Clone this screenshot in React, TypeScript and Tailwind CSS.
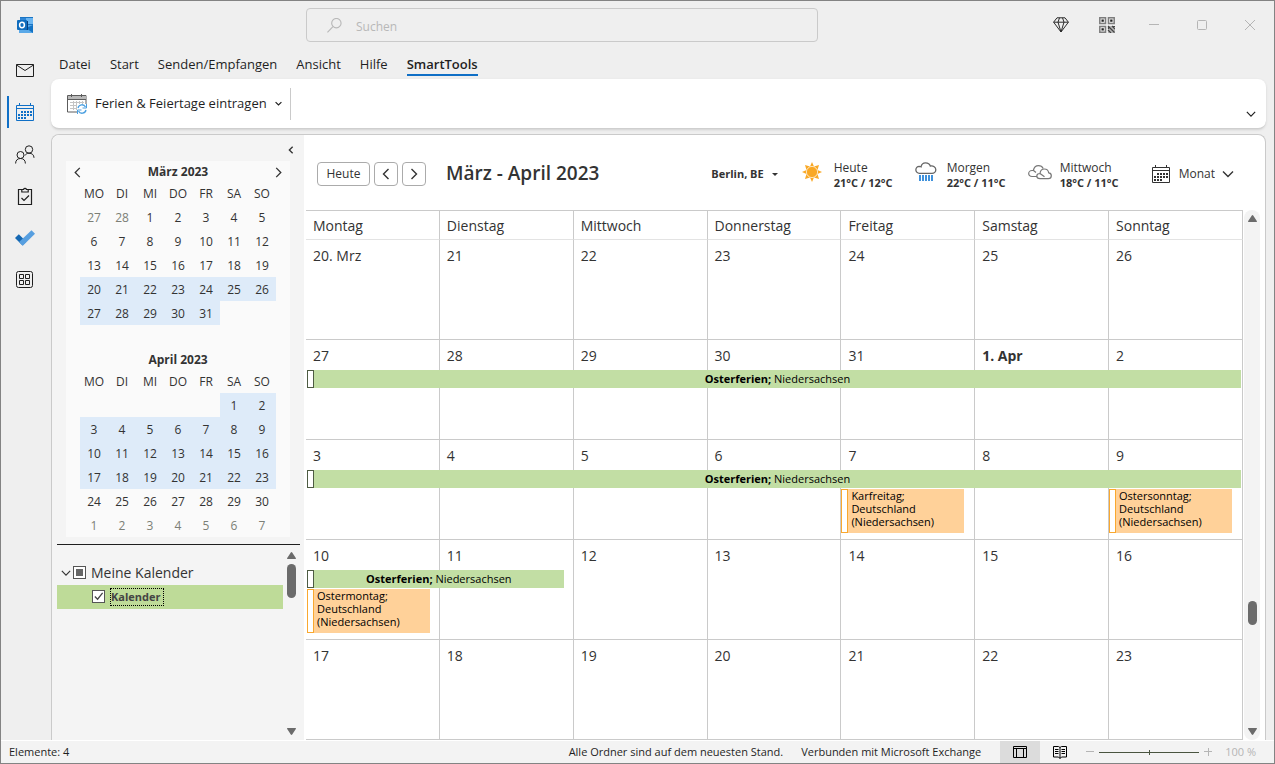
import { clsx } from "clsx";

const WEEKDAYS_SHORT = ["MO", "DI", "MI", "DO", "FR", "SA", "SO"];
const WEEKDAYS = ["Montag", "Dienstag", "Mittwoch", "Donnerstag", "Freitag", "Samstag", "Sonntag"];

const TABS = ["Datei", "Start", "Senden/Empfangen", "Ansicht", "Hilfe", "SmartTools"];

type Mark = "muted" | "selected" | "empty" | "normal";
interface MiniDay {
  label: string;
  mark: Mark;
}

const days = (from: number, to: number, mark: Mark): MiniDay[] =>
  Array.from({ length: to - from + 1 }, (_, i) => ({ label: String(from + i), mark }));
const blanks = (count: number): MiniDay[] => Array.from({ length: count }, () => ({ label: "", mark: "empty" }));

const MARCH = [...days(27, 28, "muted"), ...days(1, 19, "normal"), ...days(20, 31, "selected"), ...blanks(2)];
const APRIL = [...blanks(5), ...days(1, 23, "selected"), ...days(24, 30, "normal"), ...days(1, 7, "muted")];

interface CalendarEvent {
  kind: "ferien" | "feiertag";
  title: string;
  region?: string;
  width: string;
  lower?: boolean;
}

interface Day {
  label: string;
  bold?: boolean;
  events?: CalendarEvent[];
}

const FULL_WEEK: CalendarEvent = {
  kind: "ferien",
  title: "Osterferien;",
  region: "Niedersachsen",
  width: "w-[calc(700%+4px)]",
};
const holiday = (title: string, lower: boolean): CalendarEvent => ({
  kind: "feiertag",
  title,
  width: "w-[calc(100%-10px)]",
  lower,
});

const WEEKS: Day[][] = [
  ["20. Mrz", "21", "22", "23", "24", "25", "26"].map((label) => ({ label })),
  [
    { label: "27", events: [FULL_WEEK] },
    { label: "28" },
    { label: "29" },
    { label: "30" },
    { label: "31" },
    { label: "1. Apr", bold: true },
    { label: "2" },
  ],
  [
    { label: "3", events: [FULL_WEEK] },
    { label: "4" },
    { label: "5" },
    { label: "6" },
    { label: "7", events: [holiday("Karfreitag;", true)] },
    { label: "8" },
    { label: "9", events: [holiday("Ostersonntag;", true)] },
  ],
  [
    {
      label: "10",
      events: [{ ...FULL_WEEK, width: "w-[calc(200%-9px)]" }, holiday("Ostermontag;", false)],
    },
    ...["11", "12", "13", "14", "15", "16"].map((label) => ({ label })),
  ],
  ["17", "18", "19", "20", "21", "22", "23"].map((label) => ({ label })),
];

function Chevron({ dir, className }: { dir: "left" | "right" | "down"; className?: string }) {
  const d = { left: "M8.5 1 3.5 6l5 5", right: "M3.5 1l5 5-5 5", down: "M1 3.5l5 5 5-5" }[dir];
  return (
    <svg viewBox="0 0 12 12" className={clsx("fill-none stroke-current", className)} strokeWidth="1.4">
      <path d={d} />
    </svg>
  );
}

function OutlookLogo() {
  return (
    <svg viewBox="0 0 17 17" className="h-[17px] w-[17px]">
      <path d="M3 0h13v8H3z" fill="#1b75c4" />
      <path d="M3 1h6v5H3z" fill="#2f86d6" />
      <path d="M9 1h7v6H9z" fill="#6bb6f2" />
      <path d="M2 8h14v8H2z" fill="#5aa9e8" />
      <path d="M16 8v8l-7-5z" fill="#1272c4" />
      <path d="M4 4h7v9H4z" fill="#0a3e7c" />
      <rect y="3" width="10" height="10" rx="1" fill="#0f6cbd" />
      <ellipse cx="5" cy="8" rx="2.4" ry="2.7" fill="none" stroke="#fff" strokeWidth="1.5" />
    </svg>
  );
}

function CalendarIcon() {
  return (
    <svg viewBox="0 0 18 18" className="h-[18px] w-[18px]" fill="none" stroke="currentColor">
      <path d="M.5 2.5h17v15H.5zM.5 5.5h17M3.5 0v3M14.5 0v3" />
      <path d="M5 9h2m1 0h2m1 0h2m1 0h2M2 12h2m1 0h2m1 0h2m1 0h2m1 0h2M2 15h2m1 0h2m1 0h2" strokeWidth="2" />
    </svg>
  );
}

function HolidayIcon() {
  return (
    <svg viewBox="0 0 20 20" className="h-5 w-5" fill="none">
      <path d="M.5 1.5h18.500v16.500H.5z" fill="#fff" stroke="#5c5c5c" />
      <path d="M1 2h18v3H1z" fill="#b9b9b9" />
      <path d="M1 5.5h18M4.5 0v3M14.5 0v3" stroke="#5c5c5c" />
      <path d="M3 8.5h14M3 11.5h14M3 14.5h9M6.5 7v9M9.5 7v9M12.5 7v5M15.5 7v4" stroke="#c4c4c4" />
      <path d="M10 10h10v10H10z" fill="#fff" />
      <path d="M11 14a4 4 0 0 1 7.5-1M19 16a4 4 0 0 1-7.5 1" stroke="#4a9fe0" strokeWidth="1.3" />
      <path d="M19.5 10v4h-4M10.5 20v-4h4" stroke="#4a9fe0" />
    </svg>
  );
}

const RAIL = [
  {
    label: "E-Mail",
    icon: (
      <svg viewBox="0 0 18 13" className="h-[13px] w-[18px]" fill="none" stroke="currentColor">
        <path d="M.5.5h17v12H.5zM.5 1 9 6.5 17.500 1" />
      </svg>
    ),
  },
  { label: "Kalender", active: true, icon: <CalendarIcon /> },
  {
    label: "Personen",
    icon: (
      <svg viewBox="0 0 20 19" className="h-[19px] w-5" fill="none" stroke="currentColor">
        <circle cx="5.500" cy="10" r="3.500" />
        <path d="M.6 18.500c0-3.300 2-5 4.900-5s4.900 1.700 4.900 5" />
        <circle cx="14" cy="4.500" r="3.700" />
        <path d="M10 10.500c.9-1.600 2.200-2.300 4-2.300 3 0 5 1.700 5 4.600" />
      </svg>
    ),
  },
  {
    label: "Aufgaben",
    icon: (
      <svg viewBox="0 0 16 18" className="h-[18px] w-4" fill="none" stroke="currentColor" strokeWidth="1.2">
        <path d="M5 2.5H1.500v15h13v-15H11" />
        <path d="M4.800 5V2.500h1.700a1.600 1.600 0 0 1 3 0h1.700V5z" />
        <path d="m4.500 11 2.500 2.500 5-5" />
      </svg>
    ),
  },
  {
    label: "To Do",
    icon: (
      <svg viewBox="0 0 20 16" className="h-4 w-5">
        <path d="M3.800 4.300 0 8l7.500 7.500 3.800-3.700z" fill="#1568b3" />
        <path d="m16.500.3 3.500 3.500L7.800 15.800 4.100 12z" fill="#579fe0" />
      </svg>
    ),
  },
  {
    label: "Weitere Apps",
    icon: (
      <svg viewBox="0 0 18 18" className="h-[18px] w-[18px]" fill="none" stroke="currentColor">
        <rect x=".5" y=".5" width="16" height="16" rx="2" />
        <path d="M3.500 3.500h4v4h-4zM9.500 3.500h4v4h-4zM3.500 9.500h4v4h-4zM9.500 9.500h4v4h-4z" />
      </svg>
    ),
  },
];

function TitleBar() {
  return (
    <header className="flex h-12 shrink-0 items-center text-[#2b2b2b]">
      <div className="w-[305px] pl-4">
        <OutlookLogo />
      </div>
      <label className="flex h-[34px] max-w-[512px] flex-1 items-center rounded border border-[#cacaca] px-5 text-[#b8b8b8]">
        <svg viewBox="0 0 16 16" className="mr-[14px] h-[15px] w-[15px] fill-none stroke-current" strokeWidth="1.2">
          <circle cx="10" cy="5.5" r="5" />
          <path d="M6.300 9.200.5 15.300" />
        </svg>
        <input
          type="search"
          aria-label="Suchen"
          placeholder="Suchen"
          className="min-w-0 flex-1 bg-transparent pt-1 text-xs outline-none placeholder:text-[#b8b8b8]"
        />
      </label>
      <div className="ml-auto flex items-center pr-[19px]">
        <button aria-label="Premium" className="mr-[30px]">
          <svg viewBox="0 0 16 16" className="h-4 w-4 fill-none stroke-current" strokeLinejoin="round">
            <path d="M4 .8h8l3.400 4.400L8 15 .6 5.200zM.6 5.200h14.800M6.500.8 5 5.200 8 15l3-9.800L9.500.8" />
          </svg>
        </button>
        <button aria-label="QR-Code" className="mr-[34px]">
          <svg viewBox="0 0 16 16" className="h-4 w-4" fill="none" stroke="#7d7d7d" strokeWidth="1.5">
            <path d="M.8.8h5.700v5.700H.8zM9.500.8h5.700v5.700H9.500zM.8 9.500h5.700v5.700H.8z" />
            <path d="M2.500 2.500h2.300v2.300H2.500zM11.200 2.500h2.300v2.300h-2.300zM2.500 11.200h2.300v2.300H2.500z" fill="#222" stroke="none" />
            <path d="M9 9h7v7H9z" fill="#b5b5b5" stroke="none" />
            <path d="m9 9 6.500 6.500M13 9l3 3M9 13l3 3M14 9.500h2M9.500 12v-3" stroke="#444" strokeWidth="1.200" />
          </svg>
        </button>
        <div className="flex items-center gap-[38px] text-[#b5b5b5]">
          <button aria-label="Minimieren">
            <svg viewBox="0 0 10 10" className="h-[10px] w-[10px] stroke-current">
              <path d="M0 4.500h10" />
            </svg>
          </button>
          <button aria-label="Maximieren">
            <svg viewBox="0 0 10 10" className="h-[10px] w-[10px] fill-none stroke-current">
              <rect x=".5" y=".5" width="9" height="9" rx="1" />
            </svg>
          </button>
          <button aria-label="Schließen">
            <svg viewBox="0 0 10 10" className="h-[10px] w-[10px] stroke-current">
              <path d="m0 0 10 10M10 0 0 10" />
            </svg>
          </button>
        </div>
      </div>
    </header>
  );
}

function Rail() {
  return (
    <nav className="flex w-[50px] shrink-0 flex-col">
      {RAIL.map((item) => (
        <button
          key={item.label}
          aria-label={item.label}
          className={clsx(
            "relative flex h-[42px] items-center justify-center pr-[2px]",
            item.active ? "text-[#0f6fc6]" : "text-[#1f1f1f]"
          )}
        >
          {item.active && <span className="absolute left-[6px] top-[5px] h-8 w-[2px] bg-[#0f6fc6]" />}
          {item.icon}
        </button>
      ))}
    </nav>
  );
}

function Ribbon() {
  return (
    <>
      <nav className="flex h-[30px] shrink-0 items-start gap-[19px] pl-2 pt-[5px] text-[13px] leading-5">
        {TABS.map((tab) => (
          <a
            key={tab}
            href="#"
            className={clsx(
              "h-[22px] border-b-2",
              tab === "SmartTools" ? "border-[#0f6fc6] font-semibold" : "border-transparent"
            )}
          >
            {tab}
          </a>
        ))}
      </nav>
      <div className="flex h-[50px] shrink-0 items-center rounded-lg border-b border-[#cfcfcf] bg-white pl-4 pr-[10px] shadow-sm">
        <button className="flex items-center gap-2 text-[13px]">
          <HolidayIcon />
          <span>Ferien &amp; Feiertage eintragen</span>
          <Chevron dir="down" className="h-[7px] w-[7px] stroke-2" />
        </button>
        <span className="ml-2 h-8 w-px bg-[#cacaca]" />
        <button aria-label="Menüband einblenden" className="ml-auto self-end pb-[9px]">
          <Chevron dir="down" className="h-[10px] w-[10px]" />
        </button>
      </div>
    </>
  );
}

function MiniMonth({ title, cells, nav }: { title: string; cells: MiniDay[]; nav?: boolean }) {
  const weeks = Array.from({ length: cells.length / 7 }, (_, i) => cells.slice(i * 7, i * 7 + 7));
  return (
    <section>
      <div className="flex h-[22px] items-center justify-center px-[6px]">
        {nav && (
          <button aria-label="Vorheriger Monat">
            <Chevron dir="left" className="h-[11px] w-[11px]" />
          </button>
        )}
        <h2 className="flex-1 text-center text-xs font-bold">{title}</h2>
        {nav && (
          <button aria-label="Nächster Monat">
            <Chevron dir="right" className="h-[11px] w-[11px]" />
          </button>
        )}
      </div>
      <table className="mx-auto w-[196px] table-fixed border-separate border-spacing-0 text-center text-xs">
        <thead>
          <tr className="h-[22px]">
            {WEEKDAYS_SHORT.map((d) => (
              <th key={d} className="p-0 font-normal">
                {d}
              </th>
            ))}
          </tr>
        </thead>
        <tbody>
          {weeks.map((week, w) => (
            <tr key={w} className="h-6">
              {week.map((day, i) => (
                <td
                  key={i}
                  className={clsx(
                    "p-0 pt-[2px]",
                    day.mark === "selected" && "bg-[#deebf9]",
                    day.mark === "muted" && "text-[#7c7f76]"
                  )}
                >
                  {day.label}
                </td>
              ))}
            </tr>
          ))}
        </tbody>
      </table>
    </section>
  );
}

function ArrowHead({ down }: { down?: boolean }) {
  const d = down
    ? "M.5 0h8q.8.4.3 1L5.200 6.600q-.7.7-1.400 0L.2 1Q-.3.4.5 0z"
    : "M.5 7h8q.8-.4.3-1L5.200.4q-.7-.7-1.400 0L.2 6Q-.3 6.600.5 7z";
  return (
    <svg viewBox="0 0 9 7" className="h-[7px] w-[9px] shrink-0 fill-[#6b6b6b]">
      <path d={d} />
    </svg>
  );
}

function Sidebar() {
  return (
    <aside className="flex w-[252px] shrink-0 flex-col rounded-tl-lg bg-[#f4f4f4] text-[#333]">
      <div className="flex h-[26px] items-center justify-end pr-[9px] pt-[3px]">
        <button aria-label="Ordnerbereich minimieren">
          <Chevron dir="left" className="h-2 w-2 stroke-2" />
        </button>
      </div>
      <div className="mx-[14px] flex flex-col gap-6 bg-[#fafafa]">
        <MiniMonth title="März 2023" cells={MARCH} nav />
        <MiniMonth title="April 2023" cells={APRIL} />
      </div>
      <div className="ml-[5px] mr-1 mt-[7px] flex flex-1 border-t border-[#1f1f1f]">
        <div className="flex-1 pt-4">
          <label className="flex h-6 items-center pb-px pl-1 text-sm">
            <Chevron dir="down" className="mr-[2px] h-[10px] w-[10px]" />
            <span className="grid h-[13px] w-[13px] place-items-center">
              <input
                type="checkbox"
                className="col-start-1 row-start-1 h-[13px] w-[13px] appearance-none border border-[#555] bg-white"
              />
              <span className="col-start-1 row-start-1 h-[7px] w-[7px] bg-[#666]" />
            </span>
            <span className="ml-[5px]">Meine Kalender</span>
          </label>
          <label className="flex h-6 items-center bg-[#bedb98] pb-px pl-[35px] text-[11px] font-bold text-[#444]">
            <span className="grid h-[13px] w-[13px] place-items-center">
              <input
                type="checkbox"
                defaultChecked
                className="col-start-1 row-start-1 h-[13px] w-[13px] appearance-none border border-[#555] bg-white"
              />
              <svg
                viewBox="0 0 12 12"
                className="col-start-1 row-start-1 h-[11px] w-[11px] fill-none stroke-[#444]"
                strokeWidth="1.4"
              >
                <path d="m2 6 3 3 5.500-7" />
              </svg>
            </span>
            <span className="ml-[5px] border border-dotted border-black pr-[2px] leading-4">Kalender</span>
          </label>
        </div>
        <div className="flex w-[17px] flex-col items-center pb-[5px] pt-[7px]">
          <ArrowHead />
          <span className="mb-auto mt-[5px] h-[34px] w-[9px] rounded-full bg-[#6b6b6b]" />
          <ArrowHead down />
        </div>
      </div>
    </aside>
  );
}

function SunIcon() {
  return (
    <svg viewBox="0 0 20 20" className="h-5 w-5 fill-[#f9a825]">
      <path d="m10 0 2 4.500L17 3l-1.500 5L20 10l-4.500 2L17 17l-5-1.500L10 20l-2-4.500L3 17l1.500-5L0 10l4.500-2L3 3l5 1.500z" />
      <circle cx="10" cy="10" r="5.600" stroke="#fff" strokeWidth=".7" />
    </svg>
  );
}

function RainIcon() {
  return (
    <svg viewBox="0 0 22 20" className="h-5 w-[22px] fill-none stroke-[#666]" strokeWidth="1.300">
      <path d="M4.500 11.300a3.500 3.500 0 0 1-.3-7c1 0 1.500.3 1.800.5C6.500 2.300 8.300.8 10.500.8S14.700 2 15.300 4c3-.6 5.500 1.200 5.500 3.800 0 2-1.600 3.500-3.800 3.500z" />
      <path d="M5 13v6M8 13v6M11 13v6M14 13v6M17 13v6" stroke="#1f7fd6" strokeWidth="1.700" />
    </svg>
  );
}

function CloudIcon() {
  return (
    <svg viewBox="0 0 24 15" className="h-[15px] w-6 fill-none stroke-[#777]" strokeWidth="1.2">
      <path d="M9 11.500H4C2 11.500.7 10.200.7 8.500S2.200 5.500 4 5.500h1.300C6 2.500 8 .7 10.500.7c2.200 0 3.800 1 4.700 2.800" />
      <path d="M12 13.700c-2 0-3.200-1-3.200-2.600s1.300-2.600 3.200-2.600c.3-2.600 2-4.500 4.300-4.500 2.300 0 4 1.400 4.400 3.800 1.600.2 2.600 1.400 2.600 2.900 0 1.800-1.300 3-3 3zM12 8.500l4.500 3.200M5.500 5.500 8 7.500" />
    </svg>
  );
}

const FORECAST = [
  { day: "Heute", temp: "21°C / 12°C", icon: <SunIcon /> },
  { day: "Morgen", temp: "22°C / 11°C", icon: <RainIcon /> },
  { day: "Mittwoch", temp: "18°C / 11°C", icon: <CloudIcon /> },
];

function CalendarToolbar() {
  return (
    <div className="flex h-[75px] items-center pl-[13px] pr-[31px] pt-[3px] text-xs text-[#333]">
      <div className="flex items-center gap-1">
        <button className="h-6 w-[53px] rounded border border-[#ababab]">Heute</button>
        <button aria-label="Zurück" className="flex h-6 w-6 items-center justify-center rounded border border-[#ababab]">
          <Chevron dir="left" className="h-3 w-3" />
        </button>
        <button aria-label="Weiter" className="flex h-6 w-6 items-center justify-center rounded border border-[#ababab]">
          <Chevron dir="right" className="h-3 w-3" />
        </button>
      </div>
      <h1 className="ml-5 text-[19px] font-semibold">März - April 2023</h1>
      <div className="ml-auto flex items-center">
        <label className="mr-6 flex items-center gap-2">
          <select aria-label="Ort" className="appearance-none bg-transparent text-[11px] font-bold field-sizing-content">
            <option>Berlin, BE</option>
          </select>
          <svg viewBox="0 0 6 3" className="h-[3px] w-[6px] fill-[#333]">
            <path d="M0 0h6L3 3z" />
          </svg>
        </label>
        {FORECAST.map((f) => (
          <div key={f.day} className="flex w-[113px] items-center gap-2">
            <span className="flex w-6 shrink-0 pb-1">{f.icon}</span>
            <div className="whitespace-nowrap pt-px leading-[15px]">
              <div>{f.day}</div>
              <div className="text-[11px] font-bold leading-[15px]">{f.temp}</div>
            </div>
          </div>
        ))}
        <label className="ml-[11px] flex items-center">
          <CalendarIcon />
          <select aria-label="Ansicht" className="ml-[9px] mr-[7px] appearance-none bg-transparent field-sizing-content">
            <option>Monat</option>
          </select>
          <Chevron dir="down" className="h-3 w-3" />
        </label>
      </div>
    </div>
  );
}

function EventBox({ event }: { event: CalendarEvent }) {
  if (event.kind === "ferien") {
    return (
      <div
        className={clsx(
          "relative z-10 ml-px flex h-[18px] bg-[#c2dea4] text-[11px] leading-[18px] text-black",
          event.width
        )}
      >
        <span className="w-[7px] border border-[#4d5b42] bg-white" />
        <span className="flex-1 text-center">
          <b>{event.title}</b> {event.region}
        </span>
      </div>
    );
  }
  return (
    <div
      className={clsx(
        "flex h-11 bg-[#ffd199] text-[11px] leading-[13px] text-black",
        event.lower ? "mt-[19px]" : "ml-px mt-px",
        event.width
      )}
    >
      <span className="w-[7px] shrink-0 border border-[#f9a82f] bg-white" />
      <span className="pl-[3px]">
        {event.title}
        <br />
        Deutschland
        <br />
        (Niedersachsen)
      </span>
    </div>
  );
}

function MonthGrid() {
  return (
    <table className="w-full table-fixed border-separate border-spacing-0 border-t border-[#cacaca] text-sm text-[#333]">
      <thead>
        <tr>
          {WEEKDAYS.map((day) => (
            <th
              key={day}
              className="h-[29px] border-b border-r border-b-[#e3e3e3] border-r-[#cacaca] p-0 pl-[7px] pt-[2px] text-left font-normal"
            >
              {day}
            </th>
          ))}
        </tr>
      </thead>
      <tbody>
        {WEEKS.map((week, w) => (
          <tr key={w}>
            {week.map((day) => (
              <td key={day.label} className="h-[100px] border-b border-r border-[#cacaca] p-0 align-top">
                <div className={clsx("h-[30px] pl-[7px] leading-[31px]", day.bold && "font-bold")}>{day.label}</div>
                {day.events?.map((event) => (
                  <EventBox key={event.title} event={event} />
                ))}
              </td>
            ))}
          </tr>
        ))}
      </tbody>
    </table>
  );
}

function StatusBar() {
  return (
    <footer className="flex h-[23px] shrink-0 items-center border-t border-white bg-[#f3f3f3] pl-2 pr-[18px] text-[11px]">
      <span>Elemente: 4</span>
      <span className="ml-auto">Alle Ordner sind auf dem neuesten Stand.</span>
      <span className="ml-[18px]">Verbunden mit Microsoft Exchange</span>
      <button aria-label="Normal" className="ml-[19px] flex w-10 items-center justify-center self-stretch bg-[#dcdcdc]">
        <svg viewBox="0 0 14 12" className="h-3 w-[14px] fill-none stroke-black">
          <path d="M.5.5h13v11H.5zM.5 2.500h13M3.500 2.500v9M10.500 2.500v9" />
        </svg>
      </button>
      <button aria-label="Lesen" className="flex w-10 items-center justify-center self-stretch">
        <svg viewBox="0 0 14 13" className="h-[13px] w-[14px] fill-none stroke-black">
          <path d="M.5.5h5L7 1.500 8.500.5h5v10.500h-5L7 12.500 5.500 11h-5zM7 1.500v11M2 3.500h3.500M2 5.500h3.500M2 7.500h3.500M8.500 3.500H12M8.500 5.500H12M8.500 7.500H12" />
        </svg>
      </button>
      <button aria-label="Verkleinern" className="ml-[6px] text-[#b5b5b5]">
        <svg viewBox="0 0 8 8" className="h-2 w-2 stroke-current">
          <path d="M0 3.500h8" />
        </svg>
      </button>
      <input
        type="range"
        aria-label="Zoom"
        className="mx-[5px] h-[5px] w-[100px] appearance-none bg-[linear-gradient(#4a5540,#4a5540)] bg-[length:100%_1px] bg-center bg-no-repeat [&::-webkit-slider-thumb]:h-[5px] [&::-webkit-slider-thumb]:w-px [&::-webkit-slider-thumb]:appearance-none [&::-webkit-slider-thumb]:bg-[#4a5540]"
      />
      <button aria-label="Vergrößern" className="text-[#b5b5b5]">
        <svg viewBox="0 0 8 8" className="h-2 w-2 stroke-current">
          <path d="M0 3.500h8M4.500 0v8" />
        </svg>
      </button>
      <span className="ml-[13px] text-[#b5b5b5]">100 %</span>
    </footer>
  );
}

export default function App() {
  return (
    <div className="flex min-h-screen flex-col border border-[#838383] bg-[#efefef] font-['Open_Sans','Noto_Sans',sans-serif] text-[#1f1f1f]">
      <TitleBar />
      <div className="flex flex-1">
        <Rail />
        <div className="mr-2 flex min-w-0 flex-1 flex-col">
          <Ribbon />
          <main className="mt-[5px] flex flex-1 rounded-t-lg border border-b-0 border-[#cacaca] bg-white">
            <Sidebar />
            <div className="flex min-w-0 flex-1 flex-col">
              <CalendarToolbar />
              <div className="flex flex-1 pl-[2px] pr-[5px]">
                <div className="min-w-0 flex-1">
                  <MonthGrid />
                </div>
                <div className="ml-px flex w-4 shrink-0 flex-col items-center rounded-full bg-[#f3f3f3] py-[5px]">
                  <ArrowHead />
                  <span className="mb-[103px] mt-auto h-6 w-[9px] rounded-full bg-[#6b6b6b]" />
                  <ArrowHead down />
                </div>
              </div>
            </div>
          </main>
        </div>
      </div>
      <StatusBar />
    </div>
  );
}
